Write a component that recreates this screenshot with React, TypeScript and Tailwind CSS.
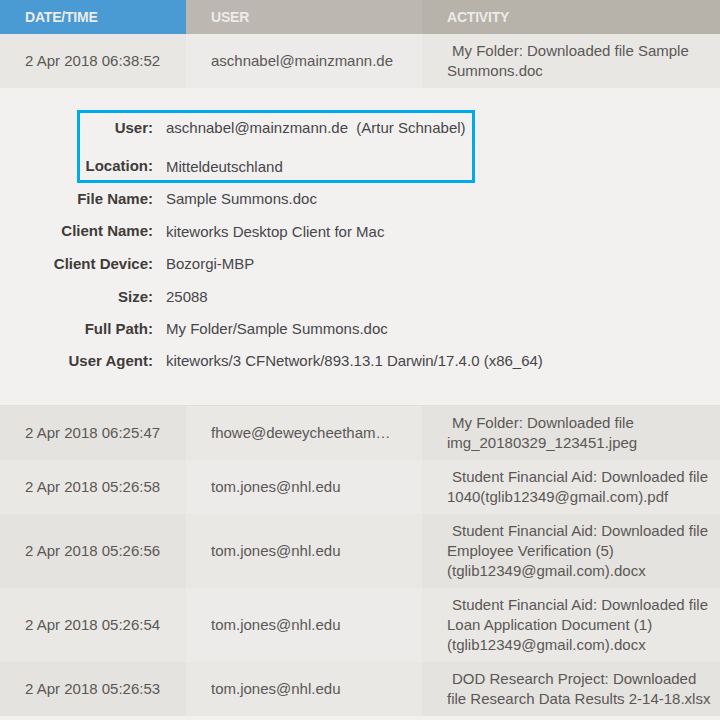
const font = "font-['Liberation_Sans',Arial,sans-serif]";

type Row = { date: string; user: string; activity: string[]; h: string; tone: 0 | 1 };

const rows: Row[] = [
  { date: "2 Apr 2018 06:25:47", user: "fhowe@deweycheetham…", activity: ["My Folder: Downloaded file", "img_20180329_123451.jpeg"], h: "h-[54px]", tone: 0 },
  { date: "2 Apr 2018 05:26:58", user: "tom.jones@nhl.edu", activity: ["Student Financial Aid: Downloaded file", "1040(tglib12349@gmail.com).pdf"], h: "h-[54px]", tone: 1 },
  { date: "2 Apr 2018 05:26:56", user: "tom.jones@nhl.edu", activity: ["Student Financial Aid: Downloaded file", "Employee Verification (5)", "(tglib12349@gmail.com).docx"], h: "h-[74px]", tone: 0 },
  { date: "2 Apr 2018 05:26:54", user: "tom.jones@nhl.edu", activity: ["Student Financial Aid: Downloaded file", "Loan Application Document (1)", "(tglib12349@gmail.com).docx"], h: "h-[74px]", tone: 1 },
  { date: "2 Apr 2018 05:26:53", user: "tom.jones@nhl.edu", activity: ["DOD Research Project: Downloaded", "file Research Data Results 2-14-18.xlsx"], h: "h-[54px]", tone: 0 },
];

function DataRow({ date, user, activity, h, tone }: Row) {
  const side = tone === 0 ? "bg-[#e4e3df]" : "bg-[#e9e8e5]";
  const mid = tone === 0 ? "bg-[#e9e8e5]" : "bg-[#ecebe9]";
  return (
    <div className={`flex text-[15px] leading-[20px] text-[#5b5755] ${h}`}>
      <div className={`w-[186px] flex items-center pl-[25px] ${side}`}>{date}</div>
      <div className={`w-[236px] flex items-center pl-[25px] ${mid}`}>{user}</div>
      <div className={`w-[298px] flex flex-col justify-center pl-[25px] whitespace-nowrap ${side}`}>
        {activity.map((line, i) => (
          <div key={line} className={i === 0 ? "pl-[5px]" : ""}>{line}</div>
        ))}
      </div>
    </div>
  );
}

function Detail({ label, value, labelW, h, low }: { label: string; value: string; labelW: string; h: string; low?: boolean }) {
  return (
    <div className={`flex items-center ${h}`}>
      <div className={`${labelW} flex justify-end font-bold text-[#3f3c3a] whitespace-nowrap`}>{label}</div>
      <div className={`ml-[13px] text-[#46464a] whitespace-pre ${low ? "mt-[2px]" : ""}`}>{value}</div>
    </div>
  );
}

export default function App() {
  return (
    <div className={`w-[720px] h-[720px] overflow-hidden bg-[#f2f1ef] ${font}`}>
      <div className="flex h-[34px] text-[14px] tracking-[-0.2px] font-bold text-[#ecebe8]">
        <div className="w-[186px] flex items-center pl-[25px] bg-[#4a9ad4]">DATE/TIME</div>
        <div className="w-[236px] flex items-center pl-[25px] bg-[#bcb8b1]">USER</div>
        <div className="w-[298px] flex items-center pl-[25px] bg-[#b7b3ab]">ACTIVITY</div>
      </div>

      <div className="flex h-[54px] text-[15px] leading-[20px] text-[#5b5755]">
        <div className="w-[186px] flex items-center pl-[25px] bg-[#e8e7e4]">2 Apr 2018 06:38:52</div>
        <div className="w-[236px] flex items-center pl-[25px] bg-[#ecebe9]">aschnabel@mainzmann.de</div>
        <div className="w-[298px] flex flex-col justify-center pl-[25px] bg-[#e8e7e4] whitespace-nowrap">
          <div className="pl-[5px]">My Folder: Downloaded file Sample</div>
          <div>Summons.doc</div>
        </div>
      </div>

      <div className="h-[318px] pt-[22px] text-[15px] leading-[20px] border-b border-[#e0dfdc]">
        <div className="ml-[77px] w-[398px] h-[73px] border-[3px] border-[#00a8ec] flex flex-col">
          <Detail label="User:" value="aschnabel@mainzmann.de  (Artur Schnabel)" labelW="w-[73px]" h="h-[29px]" />
          <Detail label="Location:" value="Mitteldeutschland" labelW="w-[73px]" h="h-[38px] pt-[10px]" low />
        </div>
        <Detail label="File Name:" value="Sample Summons.doc" labelW="w-[153px]" h="h-[32px]" />
        <Detail label="Client Name:" value="kiteworks Desktop Client for Mac" labelW="w-[153px]" h="h-[32px]" low />
        <Detail label="Client Device:" value="Bozorgi-MBP" labelW="w-[153px]" h="h-[33px]" />
        <Detail label="Size:" value="25088" labelW="w-[153px]" h="h-[33px]" />
        <Detail label="Full Path:" value="My Folder/Sample Summons.doc" labelW="w-[153px]" h="h-[32px]" />
        <Detail label="User Agent:" value="kiteworks/3 CFNetwork/893.13.1 Darwin/17.4.0 (x86_64)" labelW="w-[153px]" h="h-[32px]" />
      </div>

      {rows.map((r) => (
        <DataRow key={r.date} {...r} />
      ))}
    </div>
  );
}
